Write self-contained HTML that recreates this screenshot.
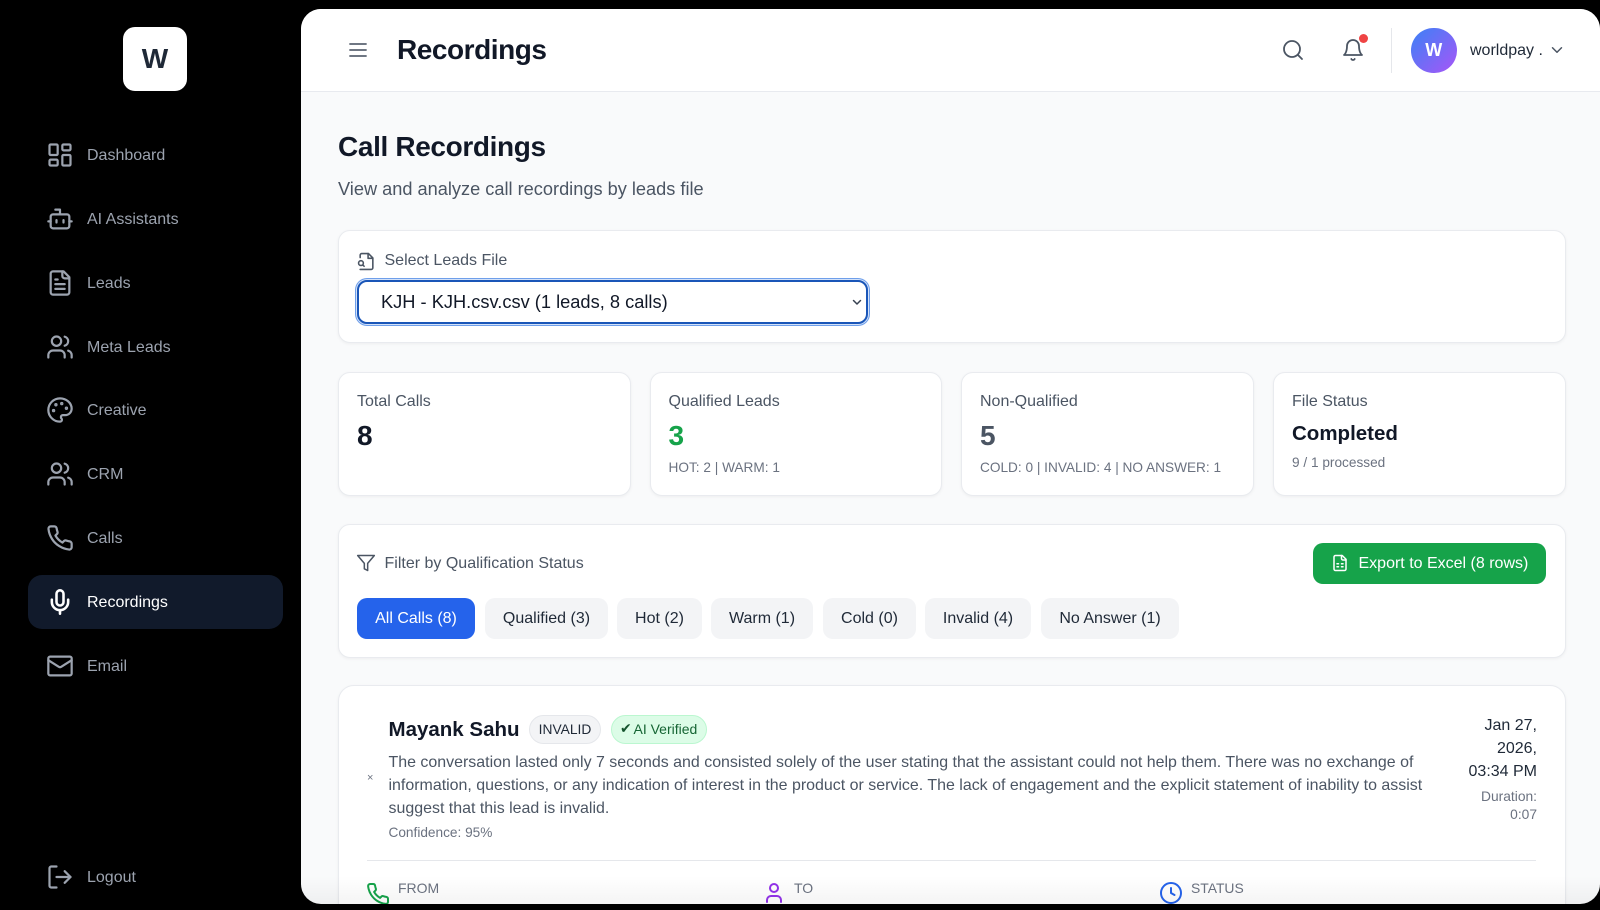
<!DOCTYPE html>
<html lang="en">
<head>
<meta charset="utf-8">
<title>Recordings</title>
<style>
*{box-sizing:border-box;margin:0;padding:0}
html,body{width:1600px;height:910px;background:#000;overflow:hidden;font-family:"Liberation Sans",sans-serif}
.a{position:absolute}
.t{position:absolute;white-space:nowrap}
svg{position:absolute;fill:none;stroke-linecap:round;stroke-linejoin:round;stroke-width:2;stroke:currentColor;overflow:visible}
.nav{position:absolute;left:87px;font-size:16px;line-height:24px;color:#9ca3af;white-space:nowrap}
.ni{left:45.5px;width:28px;height:28px;color:#9ca3af;stroke-width:1.9}
#panel{position:absolute;left:301px;top:9px;width:1299px;height:895px;border-radius:20px;overflow:hidden;background:#f9fafb}
#inner{position:absolute;left:-301px;top:-9px;width:1600px;height:910px;overflow:hidden}
.card{position:absolute;background:#fff;border:1px solid #e9ebef;border-radius:12px;box-shadow:0 1px 3px rgba(0,0,0,.05)}
.chip{position:absolute;top:597.5px;height:41px;line-height:42px;text-align:center;background:#f3f4f6;border-radius:10px;font-size:16px;color:#1f2937;white-space:nowrap}
.lab{font-size:16px;line-height:20px;color:#4b5563}
.sub{font-size:13.65px;line-height:18px;color:#6b7280}
.val{font-size:28px;line-height:34px;font-weight:700}
</style>
</head>
<body>
<div class="a" style="left:123px;top:27px;width:64px;height:64px;background:#fff;border-radius:12px;text-align:center;font-weight:700;font-size:28px;line-height:64px;color:#1f2937">W</div>

<div class="a" style="left:28px;top:575px;width:255px;height:54px;background:#111a2b;border-radius:14px"></div>

<svg class="ni" style="top:141px" viewBox="0 0 24 24"><rect x="3" y="3" width="7" height="9" rx="1"/><rect x="14" y="3" width="7" height="5" rx="1"/><rect x="14" y="12" width="7" height="9" rx="1"/><rect x="3" y="16" width="7" height="5" rx="1"/></svg>
<div class="nav" style="top:144px">Dashboard</div>

<svg class="ni" style="top:205px" viewBox="0 0 24 24"><path d="M12 8V4H8"/><rect x="4" y="8" width="16" height="12" rx="2"/><path d="M2 14h2"/><path d="M20 14h2"/><path d="M15 13v2"/><path d="M9 13v2"/></svg>
<div class="nav" style="top:208px">AI Assistants</div>

<svg class="ni" style="top:269px" viewBox="0 0 24 24"><path d="M15 2H6a2 2 0 0 0-2 2v16a2 2 0 0 0 2 2h12a2 2 0 0 0 2-2V7Z"/><path d="M14 2v4a2 2 0 0 0 2 2h4"/><path d="M10 9H8"/><path d="M16 13H8"/><path d="M16 17H8"/></svg>
<div class="nav" style="top:272px">Leads</div>

<svg class="ni" style="top:333px" viewBox="0 0 24 24"><path d="M16 21v-2a4 4 0 0 0-4-4H6a4 4 0 0 0-4 4v2"/><circle cx="9" cy="7" r="4"/><path d="M22 21v-2a4 4 0 0 0-3-3.87"/><path d="M16 3.13a4 4 0 0 1 0 7.75"/></svg>
<div class="nav" style="top:336px">Meta Leads</div>

<svg class="ni" style="top:396px" viewBox="0 0 24 24"><circle cx="13.5" cy="6.5" r=".5" fill="currentColor"/><circle cx="17.5" cy="10.5" r=".5" fill="currentColor"/><circle cx="8.5" cy="7.5" r=".5" fill="currentColor"/><circle cx="6.5" cy="12.5" r=".5" fill="currentColor"/><path d="M12 2C6.5 2 2 6.5 2 12s4.5 10 10 10c.926 0 1.648-.746 1.648-1.688 0-.437-.18-.835-.437-1.125-.29-.289-.438-.652-.438-1.125a1.64 1.64 0 0 1 1.668-1.668h1.996c3.051 0 5.555-2.503 5.555-5.554C21.965 6.012 17.461 2 12 2z"/></svg>
<div class="nav" style="top:399px">Creative</div>

<svg class="ni" style="top:460px" viewBox="0 0 24 24"><path d="M16 21v-2a4 4 0 0 0-4-4H6a4 4 0 0 0-4 4v2"/><circle cx="9" cy="7" r="4"/><path d="M22 21v-2a4 4 0 0 0-3-3.87"/><path d="M16 3.13a4 4 0 0 1 0 7.75"/></svg>
<div class="nav" style="top:463px">CRM</div>

<svg class="ni" style="top:524px" viewBox="0 0 24 24"><path d="M22 16.92v3a2 2 0 0 1-2.18 2 19.79 19.79 0 0 1-8.63-3.07 19.5 19.5 0 0 1-6-6 19.79 19.79 0 0 1-3.07-8.67A2 2 0 0 1 4.11 2h3a2 2 0 0 1 2 1.72 12.84 12.84 0 0 0 .7 2.81 2 2 0 0 1-.45 2.11L8.09 9.91a16 16 0 0 0 6 6l1.27-1.27a2 2 0 0 1 2.11-.45 12.84 12.84 0 0 0 2.81.7A2 2 0 0 1 22 16.92z"/></svg>
<div class="nav" style="top:527px">Calls</div>

<svg class="ni" style="top:588px;color:#fff;stroke-width:2.2" viewBox="0 0 24 24"><path d="M12 2a3 3 0 0 0-3 3v7a3 3 0 0 0 6 0V5a3 3 0 0 0-3-3Z"/><path d="M19 10v2a7 7 0 0 1-14 0v-2"/><line x1="12" y1="19" x2="12" y2="22"/></svg>
<div class="nav" style="top:591px;color:#fff">Recordings</div>

<svg class="ni" style="top:652px" viewBox="0 0 24 24"><rect x="2" y="4" width="20" height="16" rx="1.5"/><path d="m22 7-8.97 5.7a1.94 1.94 0 0 1-2.06 0L2 7"/></svg>
<div class="nav" style="top:655px">Email</div>

<svg class="ni" style="top:863px" viewBox="0 0 24 24"><path d="M9 21H4.500a1.500 1.500 0 0 1-1.500-1.500V4.500A1.500 1.500 0 0 1 4.500 3H9"/><polyline points="16 17 21 12 16 7"/><line x1="21" y1="12" x2="9" y2="12"/></svg>
<div class="nav" style="top:866px">Logout</div>

<div id="panel"><div id="inner">
  <div class="a" style="left:301px;top:9px;width:1299px;height:83px;background:#fff;border-bottom:1px solid #e8eaef"></div>
  <svg style="left:346px;top:38px;width:24px;height:24px;color:#5b6472;stroke-width:1.8" viewBox="0 0 24 24"><line x1="4" y1="6" x2="20" y2="6"/><line x1="4" y1="12" x2="20" y2="12"/><line x1="4" y1="18" x2="20" y2="18"/></svg>
  <div class="t" style="left:397px;top:32px;font-size:28px;line-height:36px;font-weight:700;letter-spacing:-.45px;color:#111827">Recordings</div>

  <svg style="left:1281px;top:38px;width:24px;height:24px;color:#4b5563;stroke-width:1.8" viewBox="0 0 24 24"><circle cx="11" cy="11" r="8"/><path d="m21 21-4.300-4.300"/></svg>
  <svg style="left:1341px;top:38px;width:24px;height:24px;color:#4b5563;stroke-width:1.8" viewBox="0 0 24 24"><path d="M6 8a6 6 0 0 1 12 0c0 7 3 9 3 9H3s3-2 3-9"/><path d="M10.300 21a1.940 1.940 0 0 0 3.400 0"/></svg>
  <div class="a" style="left:1359px;top:34px;width:9px;height:9px;background:#ef4444;border-radius:50%"></div>
  <div class="a" style="left:1391px;top:28px;width:1px;height:45px;background:#e5e7eb"></div>
  <div class="a" style="left:1411px;top:27.5px;width:45.5px;height:45.5px;border-radius:50%;background:linear-gradient(135deg,#3b82f6,#a855f7);color:#fff;font-weight:700;font-size:18px;line-height:45.5px;text-align:center">W</div>
  <div class="t" style="left:1470px;top:41px;font-size:16px;line-height:20px;color:#1f2937">worldpay .</div>
  <svg style="left:1547.500px;top:41px;width:18px;height:18px;color:#4b5563" viewBox="0 0 24 24"><path d="m6 9 6 6 6-6"/></svg>

  <div class="t" style="left:338px;top:129px;font-size:28px;line-height:36px;font-weight:700;letter-spacing:-.36px;color:#111827">Call Recordings</div>
  <div class="t" style="left:338px;top:176.500px;font-size:18.2px;line-height:24px;color:#4b5563">View and analyze call recordings by leads file</div>

  <div class="card" style="left:338px;top:230px;width:1228px;height:113px"></div>
  <svg style="left:357px;top:252px;width:19px;height:19px;color:#4b5563" viewBox="0 0 24 24"><path d="M4 22h14a2 2 0 0 0 2-2V7.500L14.500 2H6a2 2 0 0 0-2 2v3"/><polyline points="14 2 14 8 20 8"/><circle cx="5" cy="14" r="3"/><path d="m9 18-1.500-1.500"/></svg>
  <div class="t lab" style="left:384.500px;top:251px">Select Leads File</div>
  <div class="a" style="left:357px;top:280px;width:511px;height:44px;border:2px solid #1a56b8;border-radius:10px;box-shadow:0 0 0 1px #d3e2fa,0 0 0 2px #6f9fea;background:#fff"></div>
  <div class="t" style="left:381px;top:291px;font-size:18.25px;line-height:22px;color:#111827">KJH - KJH.csv.csv (1 leads, 8 calls)</div>
  <svg style="left:851px;top:296px;width:12px;height:12px;color:#374151" viewBox="0 0 24 24"><path d="m5 9 7 7 7-7" stroke-width="3"/></svg>

  <div class="card" style="left:338px;top:372px;width:293px;height:124px"></div>
  <div class="t lab" style="left:357px;top:392px">Total Calls</div>
  <div class="t val" style="left:357px;top:419px;color:#111827">8</div>

  <div class="card" style="left:650px;top:372px;width:292px;height:124px"></div>
  <div class="t lab" style="left:668.500px;top:392px">Qualified Leads</div>
  <div class="t val" style="left:668.500px;top:419px;color:#16a34a">3</div>
  <div class="t sub" style="left:668.500px;top:458.500px">HOT: 2 | WARM: 1</div>

  <div class="card" style="left:961px;top:372px;width:293px;height:124px"></div>
  <div class="t lab" style="left:980px;top:392px">Non-Qualified</div>
  <div class="t val" style="left:980px;top:419px;color:#4b5563">5</div>
  <div class="t sub" style="left:980px;top:458.500px">COLD: 0 | INVALID: 4 | NO ANSWER: 1</div>

  <div class="card" style="left:1273px;top:372px;width:293px;height:124px"></div>
  <div class="t lab" style="left:1292px;top:392px">File Status</div>
  <div class="t" style="left:1292px;top:421px;font-size:20.5px;line-height:26px;font-weight:700;color:#111827">Completed</div>
  <div class="t sub" style="left:1292px;top:454px">9 / 1 processed</div>

  <div class="card" style="left:338px;top:524px;width:1228px;height:134px"></div>
  <svg style="left:356px;top:553px;width:20px;height:20px;color:#4b5563;stroke-width:1.8" viewBox="0 0 24 24"><polygon points="22 3 2 3 10 12.46 10 19 14 21 14 12.46 22 3"/></svg>
  <div class="t lab" style="left:384.500px;top:554px">Filter by Qualification Status</div>
  <div class="a" style="left:1313px;top:543px;width:233px;height:41px;background:#16a34a;border-radius:10px"></div>
  <svg style="left:1331px;top:554px;width:18px;height:18px;color:#fff" viewBox="0 0 24 24"><path d="M15 2H6a2 2 0 0 0-2 2v16a2 2 0 0 0 2 2h12a2 2 0 0 0 2-2V7Z"/><path d="M14 2v4a2 2 0 0 0 2 2h4"/><path d="M8 13h2"/><path d="M14 13h2"/><path d="M8 17h2"/><path d="M14 17h2"/></svg>
  <div class="t" style="left:1358.500px;top:554px;font-size:16px;line-height:20px;color:#fff">Export to Excel (8 rows)</div>

  <div class="chip" style="left:357px;width:118px;background:#2563eb;color:#fff">All Calls (8)</div>
  <div class="chip" style="left:485px;width:123px">Qualified (3)</div>
  <div class="chip" style="left:617px;width:85px">Hot (2)</div>
  <div class="chip" style="left:711px;width:102px">Warm (1)</div>
  <div class="chip" style="left:823px;width:93px">Cold (0)</div>
  <div class="chip" style="left:925px;width:106px">Invalid (4)</div>
  <div class="chip" style="left:1041px;width:138px">No Answer (1)</div>

  <div class="card" style="left:338px;top:685px;width:1228px;height:225px;border-radius:16px 16px 0 0"></div>
  <div class="t" style="left:370px;top:771px;font-size:11px;line-height:14px;color:#6b7280;transform:translateX(-3px)">×</div>
  <div class="t" style="left:388.500px;top:717px;font-size:20.5px;line-height:26px;font-weight:700;color:#111827">Mayank Sahu</div>
  <div class="a" style="left:529px;top:715px;width:72px;height:29px;border:1px solid #e5e7eb;background:#f3f4f6;border-radius:15px;font-size:13.8px;line-height:27px;text-align:center;color:#1f2937">INVALID</div>
  <div class="a" style="left:611px;top:715px;width:96px;height:29px;border:1px solid #bbf7d0;background:#dcfce7;border-radius:15px"></div>
  <div class="t" style="left:620px;top:721px;font-size:14px;line-height:17px;color:#14532d;font-family:'DejaVu Sans',sans-serif">✔</div>
  <div class="t" style="left:633.500px;top:721px;font-size:14px;line-height:17px;color:#166534">AI Verified</div>
  <div class="a" style="left:388.500px;top:752px;width:1040px;font-size:15.96px;line-height:22.75px;color:#4b5563">The conversation lasted only 7 seconds and consisted solely of the user stating that the assistant could not help them. There was no exchange of<br>information, questions, or any indication of interest in the product or service. The lack of engagement and the explicit statement of inability to assist<br>suggest that this lead is invalid.</div>
  <div class="t sub" style="left:388.500px;top:823.500px">Confidence: 95%</div>

  <div class="a" style="left:1437px;top:714px;width:100px;font-size:16px;line-height:23px;text-align:right;color:#1f2937">Jan 27,<br>2026,<br>03:34 PM</div>
  <div class="a" style="left:1437px;top:788px;width:100px;font-size:13.8px;line-height:18px;text-align:right;color:#6b7280">Duration:<br>0:07</div>

  <div class="a" style="left:367px;top:860px;width:1169px;height:1px;background:#e5e7eb"></div>

  <svg style="left:366px;top:882px;width:24px;height:24px;color:#16a34a" viewBox="0 0 24 24"><path d="M22 16.92v3a2 2 0 0 1-2.18 2 19.79 19.79 0 0 1-8.63-3.07 19.5 19.5 0 0 1-6-6 19.79 19.79 0 0 1-3.07-8.67A2 2 0 0 1 4.11 2h3a2 2 0 0 1 2 1.72 12.84 12.84 0 0 0 .7 2.81 2 2 0 0 1-.45 2.11L8.09 9.91a16 16 0 0 0 6 6l1.27-1.27a2 2 0 0 1 2.11-.45 12.84 12.84 0 0 0 2.81.7A2 2 0 0 1 22 16.92z"/></svg>
  <div class="t" style="left:398px;top:879px;font-size:14px;line-height:18px;color:#6b7280">FROM</div>
  <svg style="left:761.500px;top:881px;width:24px;height:24px;color:#9333ea" viewBox="0 0 24 24"><path d="M19 21v-2a4 4 0 0 0-4-4H9a4 4 0 0 0-4 4v2"/><circle cx="12" cy="7" r="4"/></svg>
  <div class="t" style="left:794px;top:879px;font-size:14px;line-height:18px;color:#6b7280">TO</div>
  <svg style="left:1158.500px;top:881px;width:24px;height:24px;color:#2563eb" viewBox="0 0 24 24"><circle cx="12" cy="12" r="10"/><polyline points="12 7 12 12 15.500 14"/></svg>
  <div class="t" style="left:1191px;top:879px;font-size:13.9px;line-height:18px;color:#6b7280">STATUS</div>
  <div class="a" style="left:301px;top:876px;width:1299px;height:28px;background:linear-gradient(rgba(0,0,0,0),rgba(0,0,0,.045));pointer-events:none"></div>
</div></div>
</body>
</html>
